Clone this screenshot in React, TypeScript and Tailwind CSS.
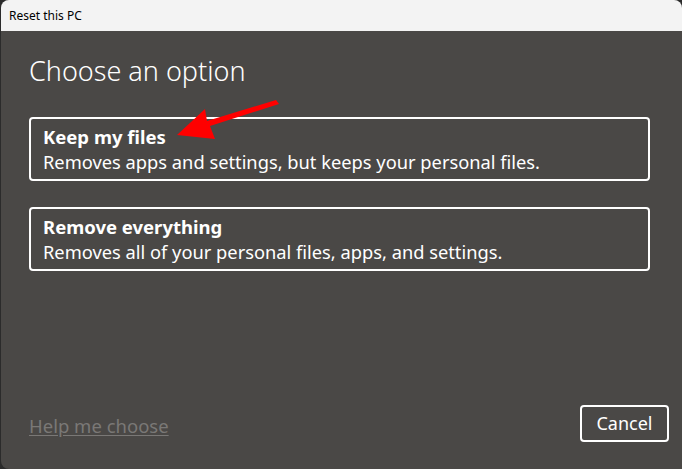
import React from 'react'

const options = [
  { title: 'Keep my files', desc: 'Removes apps and settings, but keeps your personal files.' },
  { title: 'Remove everything', desc: 'Removes all of your personal files, apps, and settings.' },
]

function Arrow() {
  return (
    <svg className="absolute left-0 top-0 pointer-events-none" width="682" height="469" viewBox="0 0 682 469">
      <path d="M276 100 L279 104 L210 126 L215 139 L177 135 L205 109 L207 121 Z" fill="#ff0000" />
    </svg>
  )
}

export default function App() {
  return (
    <div
      className="relative w-[682px] h-[469px] bg-[#2b2b2b] overflow-hidden"
      style={{ fontFamily: '"Noto Sans", "Open Sans", sans-serif' }}
    >
      <div className="absolute inset-0 left-[1px] rounded-t-[8px] rounded-bl-[8px] overflow-hidden flex flex-col bg-[#4a4846]">
        <div className="h-[31px] shrink-0 bg-[#f3f3f3] flex items-center pl-[8px] text-[12px] text-black">
          Reset this PC
        </div>
        <div className="flex-1 flex flex-col pl-[28px] pr-[32px]">
          <h1 className="mt-[26px] text-[27px] font-light text-white leading-none">Choose an option</h1>
          <div className="mt-[33px] flex flex-col gap-[26px]">
            {options.map((o) => (
              <button
                key={o.title}
                className="h-[64px] border-2 border-white rounded-[4px] text-left px-[12px] pt-[1px] flex flex-col justify-center text-white"
              >
                <span className="text-[18.5px] font-bold leading-[24px]">{o.title}</span>
                <span className="text-[18.3px] leading-[25px]">{o.desc}</span>
              </button>
            ))}
          </div>
        </div>
        <div className="flex items-end justify-between pl-[28px] pr-[13px] pb-[27px]">
          <a className="text-[18.5px] text-[#7a7876] underline underline-offset-2 leading-[24px] mb-[4px]">Help me choose</a>
          <button className="w-[89px] h-[37px] border-2 border-white rounded-[4px] text-[18px] text-white">
            Cancel
          </button>
        </div>
      </div>
      <Arrow />
    </div>
  )
}
